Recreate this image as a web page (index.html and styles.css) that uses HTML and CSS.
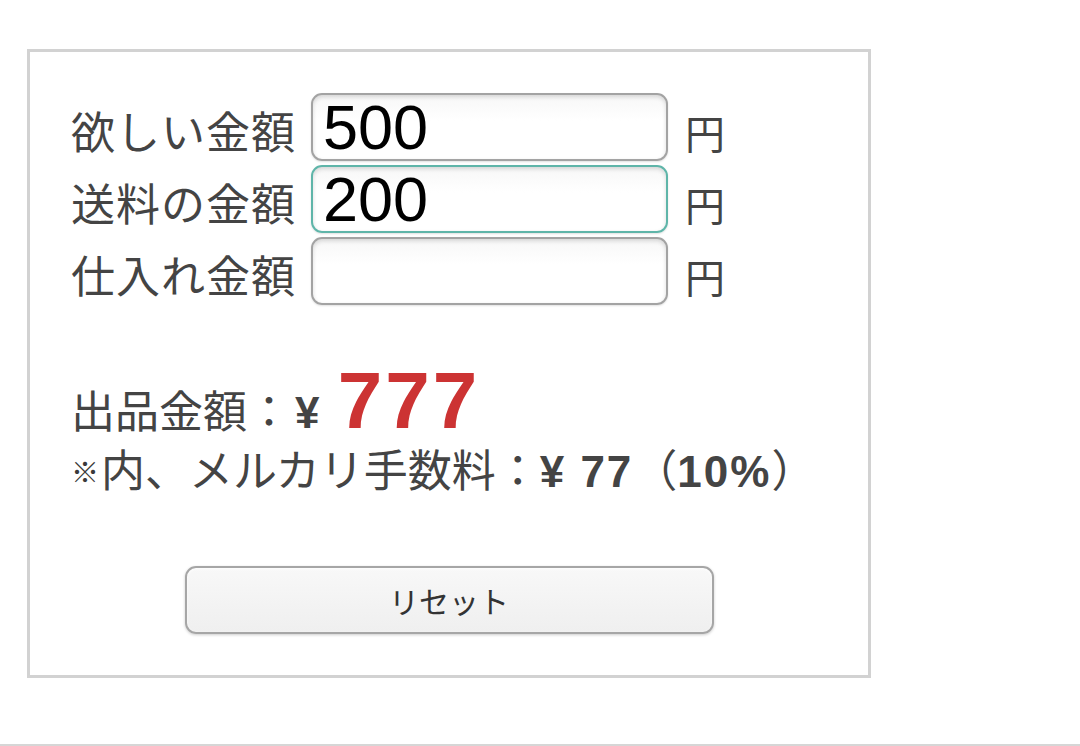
FILE: index.html
```html
<!DOCTYPE html>
<html lang="ja">
<head>
    <meta charset="utf-8">
    <title>出品金額計算</title>
    <link rel="stylesheet" href="styles.css">
</head>
<body>
    <div class="calc">
        <div class="row">
            <label class="label" for="want">欲しい金額</label>
            <input class="field" id="want" type="text" value="500">
            <span class="unit">円</span>
        </div>
        <div class="row">
            <label class="label" for="ship">送料の金額</label>
            <input class="field focused" id="ship" type="text" value="200">
            <span class="unit">円</span>
        </div>
        <div class="row">
            <label class="label" for="cost">仕入れ金額</label>
            <input class="field" id="cost" type="text" value="">
            <span class="unit">円</span>
        </div>

        <div class="result">
            <div class="total">出品金額：<span class="yen">¥</span> <span class="amount">777</span></div>
            <div class="fee"><span class="mark">※</span>内、メルカリ手数料：<span class="num">¥ 77</span>（<span class="num">10%</span>）</div>
        </div>

        <div class="actions">
            <button class="reset" type="button">リセット</button>
        </div>
    </div>
    <div class="divider"></div>
</body>
</html>
```

FILE: styles.css
```css
body {
    margin: 0;
    background: #fff;
    font-family: "Liberation Sans", "Noto Sans CJK JP", sans-serif;
    color: #444;
}
.calc {
    box-sizing: border-box;
    width: 844px;
    margin: 49px 0 0 27px;
    padding: 41px 41px 41px 41px;
    border: 3px solid #d2d2d2;
}
.row {
    display: flex;
    align-items: baseline;
    margin-bottom: 4px;
}
.label {
    font-size: 44px;
    line-height: 1.2;
    letter-spacing: 1px;
    margin-right: 15px;
    white-space: nowrap;
}
.field {
    box-sizing: border-box;
    width: 357px;
    height: 68px;
    padding: 0 10px;
    border: 2px solid #a3a3a3;
    border-radius: 11px;
    background: linear-gradient(#f7f7f7, #fff 40%);
    box-shadow: inset 0 2px 4px rgba(0, 0, 0, 0.14), 0 1px 2px rgba(0, 0, 0, 0.12);
    font-family: "Liberation Sans", sans-serif;
    font-size: 63px;
    color: #000;
    outline: none;
}
.field.focused {
    border-color: #5fb5a9;
}
.unit {
    font-size: 40px;
    line-height: 1.2;
    margin-left: 17px;
}
.result {
    margin-top: 56px;
}
.total {
    font-size: 44px;
    line-height: 1;
}
.yen {
    font-weight: bold;
    margin-left: 4px;
}
.amount {
    font-size: 80px;
    font-weight: bold;
    letter-spacing: 3px;
    margin-left: 6px;
    color: #cc3333;
}
.fee {
    font-size: 44px;
    line-height: 1.4;
}
.mark {
    font-size: 28px;
    font-weight: bold;
    vertical-align: 4px;
    margin-right: 2px;
    color: #3a3a3a;
}
.num {
    font-weight: bold;
    letter-spacing: 2px;
}
.actions {
    display: flex;
    justify-content: center;
    margin-top: 63px;
}
.reset {
    box-sizing: border-box;
    width: 529px;
    height: 68px;
    border: 2px solid #a6a6a6;
    border-radius: 11px;
    background: linear-gradient(#f8f8f8, #efefef);
    box-shadow: inset 0 1px 3px rgba(255, 255, 255, 0.9), 0 1px 3px rgba(0, 0, 0, 0.2);
    font-family: "Noto Sans CJK JP", sans-serif;
    font-size: 30px;
    color: #333;
}
.divider {
    margin-top: 66px;
    border-top: 2px solid #d6d6d6;
}
```
